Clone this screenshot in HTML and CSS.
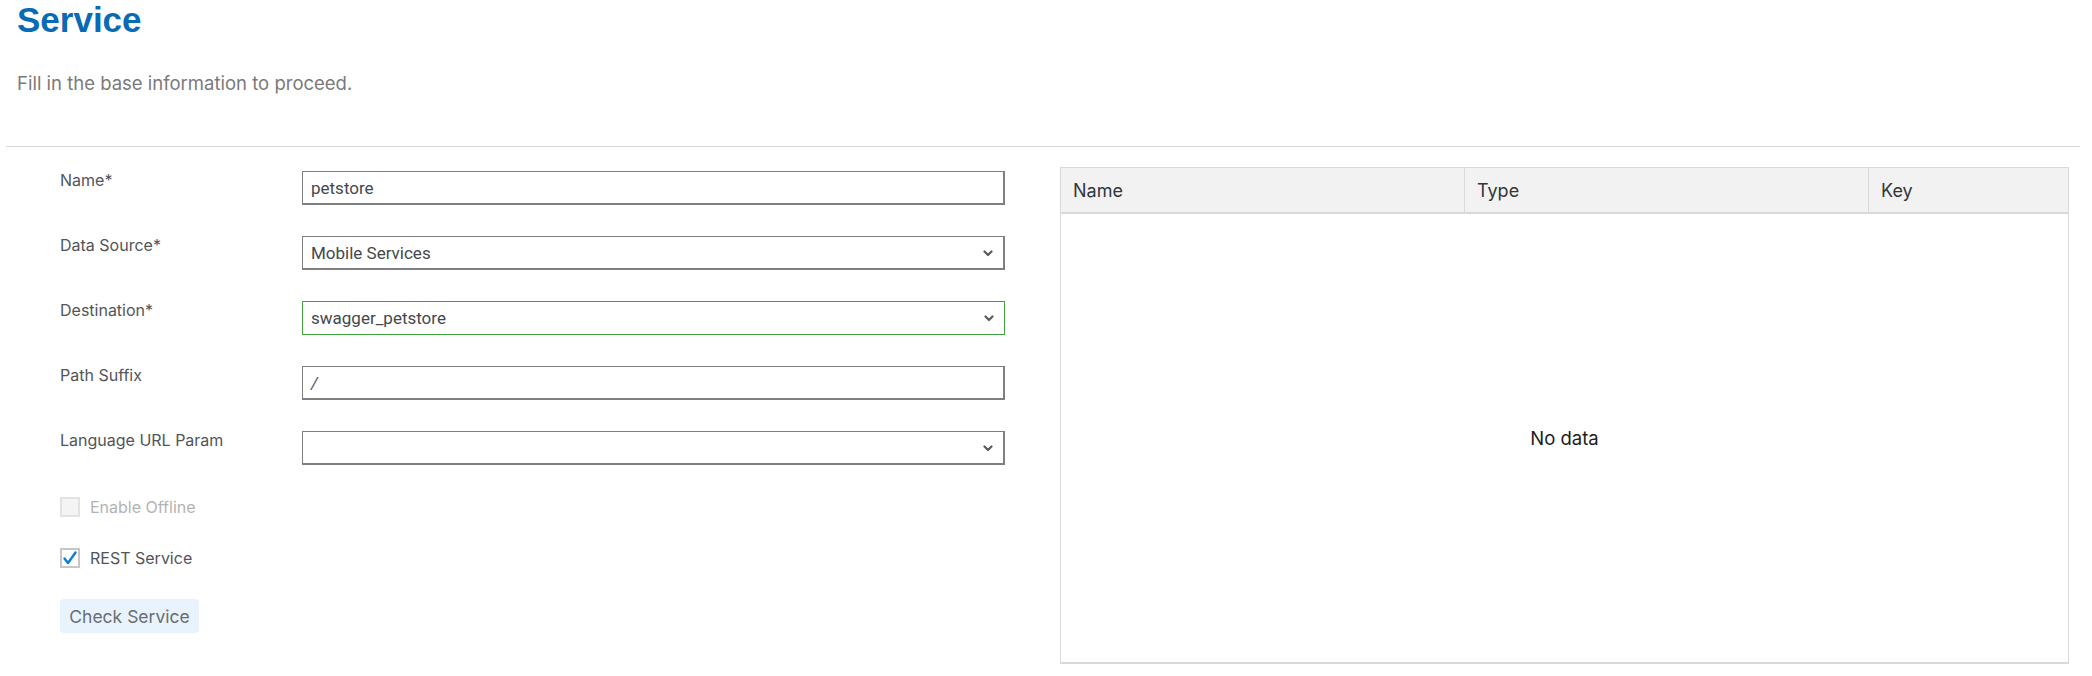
FILE: index.html
```html
<!DOCTYPE html>
<html lang="en">
<head>
<meta charset="utf-8">
<title>Service</title>
<link rel="stylesheet" href="styles.css">
</head>
<body>
<header class="page-head">
  <h1 class="title">Service</h1>
  <p class="subtitle">Fill in the base information to proceed.</p>
</header>
<hr class="divider">
<main class="content">
  <form class="form">
    <div class="row">
      <label class="label">Name*</label>
      <div class="field"><span class="value">petstore</span></div>
    </div>
    <div class="row">
      <label class="label">Data Source*</label>
      <div class="field select"><span class="value">Mobile Services</span>
        <svg class="chev" width="10" height="7" viewBox="0 0 10 7"><polyline points="1.5,1.5 5,5 8.5,1.5" fill="none" stroke="#5a5d60" stroke-width="2.2" stroke-linecap="round" stroke-linejoin="round"/></svg>
      </div>
    </div>
    <div class="row">
      <label class="label">Destination*</label>
      <div class="field select valid"><span class="value">swagger_petstore</span>
        <svg class="chev" width="10" height="7" viewBox="0 0 10 7"><polyline points="1.5,1.5 5,5 8.5,1.5" fill="none" stroke="#5a5d60" stroke-width="2.2" stroke-linecap="round" stroke-linejoin="round"/></svg>
      </div>
    </div>
    <div class="row">
      <label class="label">Path Suffix</label>
      <div class="field"><span class="value slash">/</span></div>
    </div>
    <div class="row">
      <label class="label">Language URL Param</label>
      <div class="field select"><span class="value"></span>
        <svg class="chev" width="10" height="7" viewBox="0 0 10 7"><polyline points="1.5,1.5 5,5 8.5,1.5" fill="none" stroke="#5a5d60" stroke-width="2.2" stroke-linecap="round" stroke-linejoin="round"/></svg>
      </div>
    </div>
    <div class="check-row disabled">
      <span class="box"></span>
      <span class="check-label">Enable Offline</span>
    </div>
    <div class="check-row checked">
      <span class="box">
        <svg width="16" height="16" viewBox="0 0 16 16"><polyline points="2.5,8.5 6,13 13.5,2.5" fill="none" stroke="#0a7fd6" stroke-width="2.4" stroke-linecap="round" stroke-linejoin="round"/></svg>
      </span>
      <span class="check-label">REST Service</span>
    </div>
    <button type="button" class="btn">Check Service</button>
  </form>
  <section class="table">
    <div class="thead">
      <div class="th">Name</div>
      <div class="th">Type</div>
      <div class="th">Key</div>
    </div>
    <div class="tbody">No data</div>
  </section>
</main>
</body>
</html>
```
FILE: styles.css
```css
* { box-sizing: border-box; }
html, body { margin: 0; padding: 0; background: #fff; }
body {
  font-family: "Inter", "Liberation Sans", sans-serif;
  color: #32363a;
  width: 2092px;
  height: 676px;
  overflow: hidden;
}
.page-head { padding: 0 0 0 17px; }
.title {
  margin: 0;
  font-family: "Liberation Sans", Arial, sans-serif;
  font-weight: 700;
  font-size: 35px;
  line-height: 40px;
  color: #0a6bb5;
}
.subtitle {
  margin: 31px 0 0;
  font-size: 18.5px;
  line-height: 24px;
  color: #7a7a7a;
}
.divider {
  margin: 51px 12px 0 6px;
  border: 0;
  border-top: 1px solid #d6d6d6;
  height: 0;
}
.content {
  display: flex;
  align-items: flex-start;
  padding: 20px 23px 0 60px;
  gap: 55px;
}
.form {
  display: flex;
  flex-direction: column;
  width: 945px;
  padding-top: 4px;
}
.row {
  display: flex;
  align-items: flex-start;
  margin-bottom: 31px;
}
.label {
  width: 242px;
  flex: none;
  font-size: 16px;
  line-height: 20px;
  margin-top: -1px;
  color: #515559;
}
.field {
  position: relative;
  width: 703px;
  height: 34px;
  border: 1px solid #7d7f82;
  border-bottom-width: 2px;
  border-right-width: 2px;
  display: flex;
  align-items: center;
  padding: 0 8px;
  background: #fff;
}
.field.valid { border-color: #3fa33f; border-width: 1px; }
.value {
  font-family: "Roboto", "Liberation Sans", sans-serif;
  font-size: 17px;
  color: #45484b;
}
.slash { font-style: italic; color: #555; }
.chev { position: absolute; right: 10px; top: 13px; }
.check-row {
  display: flex;
  align-items: center;
  gap: 10px;
  height: 20px;
  margin-bottom: 31px;
}
.form .row:nth-child(5) { margin-bottom: 32px; }
.box {
  width: 20px;
  height: 20px;
  border: 2px solid #d4d4d4;
  background: #fff;
  display: flex;
  align-items: center;
  justify-content: center;
}
.disabled .box { background: #f4f4f4; border-color: #e2e2e2; }
.checked .box { border-color: #c6c6c6; }
.check-label { font-size: 16px; color: #515559; }
.disabled .check-label { color: #b3b3b3; }
.btn {
  align-self: flex-start;
  width: 139px;
  height: 34px;
  border: 0;
  border-radius: 4px;
  background: #e9f3fd;
  color: #6a6d70;
  font-family: "Inter", "Liberation Sans", sans-serif;
  font-size: 17.5px;
  padding: 0;
}
.table {
  flex: 1;
  height: 497px;
  border: 1px solid #d9d9d9;
  border-bottom-width: 2px;
  display: flex;
  flex-direction: column;
}
.thead {
  display: grid;
  grid-template-columns: 403px 404px 1fr;
  height: 46px;
  background: #f2f2f2;
  border-bottom: 2px solid #d9d9d9;
}
.th {
  display: flex;
  align-items: center;
  padding-left: 12px;
  font-size: 18px;
  color: #32363a;
  border-left: 1px solid #dadada;
}
.th:first-child { border-left: 0; }
.tbody {
  flex: 1;
  display: flex;
  align-items: center;
  justify-content: center;
  font-size: 18.5px;
  color: #1d1d1d;
}
```
